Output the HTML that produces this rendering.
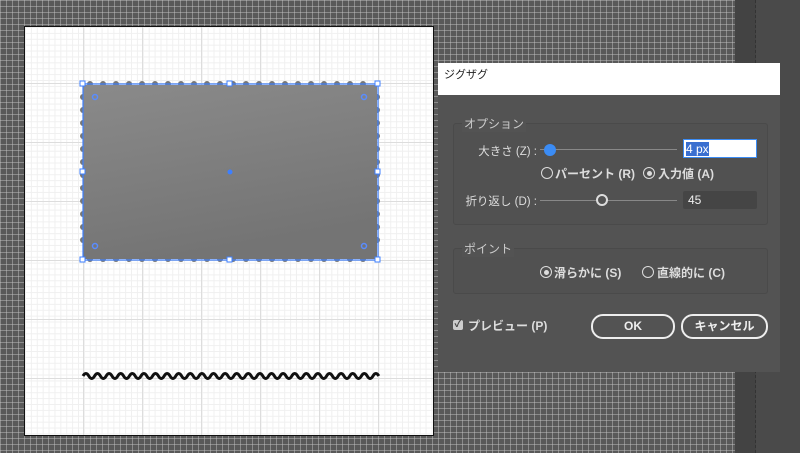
<!DOCTYPE html>
<html><head><meta charset="utf-8"><style>
body{margin:0;width:800px;height:453px;overflow:hidden;position:relative;font-family:"Liberation Sans","Noto Sans CJK JP",sans-serif;background:#555}
.dg{position:absolute;left:0;top:0;width:735px;height:453px;background-color:#595959;background-image:linear-gradient(90deg,rgba(200,200,200,.45) 1px,transparent 1px),linear-gradient(rgba(200,200,200,.45) 1px,transparent 1px);background-size:6px 6px}
.rp{position:absolute;left:735px;top:0;width:20px;height:453px;background:#434343;border-right:1px dashed #333}
.rp2{position:absolute;left:756px;top:0;width:44px;height:453px;background:#4a4a4a}
.ab{position:absolute;left:24px;top:26px;width:408px;height:408px;background-color:#fff;border:1px solid #111;
background-image:linear-gradient(90deg,#ddd 1px,transparent 1px),linear-gradient(#ddd 1px,transparent 1px),linear-gradient(90deg,#f0f0f0 1px,transparent 1px),linear-gradient(#f0f0f0 1px,transparent 1px);
background-size:59px 59px,59px 59px,5.9px 5.9px,5.9px 5.9px;background-position:58px 56px,58px 56px,0 0,0 0}
.dl{position:absolute;left:438px;top:63px;width:342px;height:309px;background:#535353;color:#ddd;font-size:12px}
.tt{height:32px;background:#fff;color:#222;font-size:11px;line-height:24px;padding-left:6px}
.fs{position:absolute;border:1px solid #4a4a4a;border-radius:3px;background:#515151}
.lg{position:absolute;color:#ccc;font-size:12px}
.t{position:absolute;white-space:nowrap;font-size:12px}
.rad{position:absolute;width:10px;height:10px;border:1.5px solid #ddd;border-radius:50%}
.rad.on::after{content:"";position:absolute;left:2.5px;top:2.5px;width:5px;height:5px;border-radius:50%;background:#ddd}
.btn{position:absolute;height:21px;border:2px solid #eee;border-radius:12px;color:#eee;text-align:center;line-height:21px;font-size:12px;font-weight:bold}
</style></head><body>
<div class="dg"></div><div class="rp"></div><div class="rp2"></div>
<div class="ab"></div>
<svg style="position:absolute;left:0;top:0" width="440" height="453">
<defs><linearGradient id="g" x1="0" y1="0" x2="0.3" y2="1"><stop offset="0" stop-color="#8a8a8a"/><stop offset="1" stop-color="#747474"/></linearGradient></defs>
<g fill="#777">
<circle cx="90" cy="84" r="3"/><circle cx="103" cy="84" r="3"/><circle cx="116" cy="84" r="3"/><circle cx="129" cy="84" r="3"/><circle cx="142" cy="84" r="3"/><circle cx="155" cy="84" r="3"/><circle cx="168" cy="84" r="3"/><circle cx="181" cy="84" r="3"/><circle cx="194" cy="84" r="3"/><circle cx="207" cy="84" r="3"/><circle cx="220" cy="84" r="3"/><circle cx="233" cy="84" r="3"/><circle cx="246" cy="84" r="3"/><circle cx="259" cy="84" r="3"/><circle cx="272" cy="84" r="3"/><circle cx="285" cy="84" r="3"/><circle cx="298" cy="84" r="3"/><circle cx="311" cy="84" r="3"/><circle cx="324" cy="84" r="3"/><circle cx="337" cy="84" r="3"/><circle cx="350" cy="84" r="3"/><circle cx="363" cy="84" r="3"/>
<circle cx="90" cy="259" r="3"/><circle cx="103" cy="259" r="3"/><circle cx="116" cy="259" r="3"/><circle cx="129" cy="259" r="3"/><circle cx="142" cy="259" r="3"/><circle cx="155" cy="259" r="3"/><circle cx="168" cy="259" r="3"/><circle cx="181" cy="259" r="3"/><circle cx="194" cy="259" r="3"/><circle cx="207" cy="259" r="3"/><circle cx="220" cy="259" r="3"/><circle cx="233" cy="259" r="3"/><circle cx="246" cy="259" r="3"/><circle cx="259" cy="259" r="3"/><circle cx="272" cy="259" r="3"/><circle cx="285" cy="259" r="3"/><circle cx="298" cy="259" r="3"/><circle cx="311" cy="259" r="3"/><circle cx="324" cy="259" r="3"/><circle cx="337" cy="259" r="3"/><circle cx="350" cy="259" r="3"/><circle cx="363" cy="259" r="3"/>
<circle cx="83" cy="97" r="3"/><circle cx="83" cy="110" r="3"/><circle cx="83" cy="123" r="3"/><circle cx="83" cy="136" r="3"/><circle cx="83" cy="149" r="3"/><circle cx="83" cy="162" r="3"/><circle cx="83" cy="175" r="3"/><circle cx="83" cy="188" r="3"/><circle cx="83" cy="201" r="3"/><circle cx="83" cy="214" r="3"/><circle cx="83" cy="227" r="3"/><circle cx="83" cy="240" r="3"/>
<circle cx="377" cy="97" r="3"/><circle cx="377" cy="110" r="3"/><circle cx="377" cy="123" r="3"/><circle cx="377" cy="136" r="3"/><circle cx="377" cy="149" r="3"/><circle cx="377" cy="162" r="3"/><circle cx="377" cy="175" r="3"/><circle cx="377" cy="188" r="3"/><circle cx="377" cy="201" r="3"/><circle cx="377" cy="214" r="3"/><circle cx="377" cy="227" r="3"/><circle cx="377" cy="240" r="3"/>
</g>
<rect x="83" y="85" width="294" height="174" fill="url(#g)"/>
<rect x="83" y="84" width="295" height="176" fill="none" stroke="#3d7fff" stroke-width="1.2"/>
<g fill="#fff" stroke="#3d7fff" stroke-width="1">
<rect x="80" y="81" width="5" height="5"/><rect x="227" y="81" width="5" height="5"/><rect x="375" y="81" width="5" height="5"/>
<rect x="80" y="169" width="5" height="5"/><rect x="375" y="169" width="5" height="5"/>
<rect x="80" y="257" width="5" height="5"/><rect x="227" y="257" width="5" height="5"/><rect x="375" y="257" width="5" height="5"/>
</g>
<g fill="none" stroke="#5a8cff" stroke-width="1.5"><circle cx="95" cy="97" r="2.5"/><circle cx="364" cy="97" r="2.5"/><circle cx="95" cy="246" r="2.5"/><circle cx="364" cy="246" r="2.5"/></g>
<circle cx="230" cy="172" r="2.5" fill="#3d7fff"/>
<path d="M83 376 q2.9 -5 5.8 0 t5.8 0 t5.8 0 t5.8 0 t5.8 0 t5.8 0 t5.8 0 t5.8 0 t5.8 0 t5.8 0 t5.8 0 t5.8 0 t5.8 0 t5.8 0 t5.8 0 t5.8 0 t5.8 0 t5.8 0 t5.8 0 t5.8 0 t5.8 0 t5.8 0 t5.8 0 t5.8 0 t5.8 0 t5.8 0 t5.8 0 t5.8 0 t5.8 0 t5.8 0 t5.8 0 t5.8 0 t5.8 0 t5.8 0 t5.8 0 t5.8 0 t5.8 0 t5.8 0 t5.8 0 t5.8 0 t5.8 0 t5.8 0 t5.8 0 t5.8 0 t5.8 0 t5.8 0 t5.8 0 t5.8 0 t5.8 0 t5.8 0 t5.8 0" fill="none" stroke="#111" stroke-width="3"/>
</svg>
<div class="dl">
<div class="tt">ジグザグ</div>
<div class="fs" style="left:15px;top:60px;width:313px;height:100px"></div>
<div class="lg" style="left:24px;top:52px;background:#535353;padding:0 2px">オプション</div>
<div class="t" style="right:243px;top:80px;font-size:11.5px">大きさ (Z) :</div>
<div style="position:absolute;left:102px;top:86px;width:137px;height:1px;background:#888"></div>
<div style="position:absolute;left:106px;top:81px;width:12px;height:12px;border-radius:50%;background:#3b8cf5"></div>
<div style="position:absolute;left:245px;top:76px;width:74px;height:19px;background:#fff;border:1px solid #3b8cf5;box-sizing:border-box"><span style="background:#3a6fd0;color:#fff;font-size:12px;margin:2px 0 0 2px;display:inline-block;line-height:14px">4 px</span></div>
<div class="rad" style="left:103px;top:104px"></div><div class="t" style="left:117px;top:102px;font-weight:bold">パーセント (R)</div>
<div class="rad on" style="left:205px;top:104px"></div><div class="t" style="left:220px;top:102px;font-weight:bold">入力値 (A)</div>
<div class="t" style="right:243px;top:130px;font-size:11.5px">折り返し (D) :</div>
<div style="position:absolute;left:102px;top:137px;width:137px;height:1px;background:#888"></div>
<div style="position:absolute;left:158px;top:131px;width:8px;height:8px;border-radius:50%;border:2px solid #ddd;background:#535353"></div>
<div style="position:absolute;left:245px;top:128px;width:74px;height:18px;background:#454545;border-radius:2px;color:#eee;font-size:12px;line-height:18px;padding-left:5px;box-sizing:border-box">45</div>
<div class="fs" style="left:15px;top:185px;width:313px;height:44px"></div>
<div class="lg" style="left:24px;top:177px;background:#535353;padding:0 2px">ポイント</div>
<div class="rad on" style="left:102px;top:203px"></div><div class="t" style="left:116px;top:201px;font-weight:bold">滑らかに (S)</div>
<div class="rad" style="left:204px;top:203px"></div><div class="t" style="left:219px;top:201px;font-weight:bold">直線的に (C)</div>
<div style="position:absolute;left:15px;top:257px;width:10px;height:10px;background:#ccc;border-radius:2px;color:#444;font-size:10px;line-height:10px;text-align:center;font-weight:bold">✓</div>
<div class="t" style="left:30px;top:254px;font-weight:bold">プレビュー (P)</div>
<div class="btn" style="left:153px;top:251px;width:80px">OK</div>
<div class="btn" style="left:243px;top:251px;width:83px">キャンセル</div>
</div>
</body></html>
